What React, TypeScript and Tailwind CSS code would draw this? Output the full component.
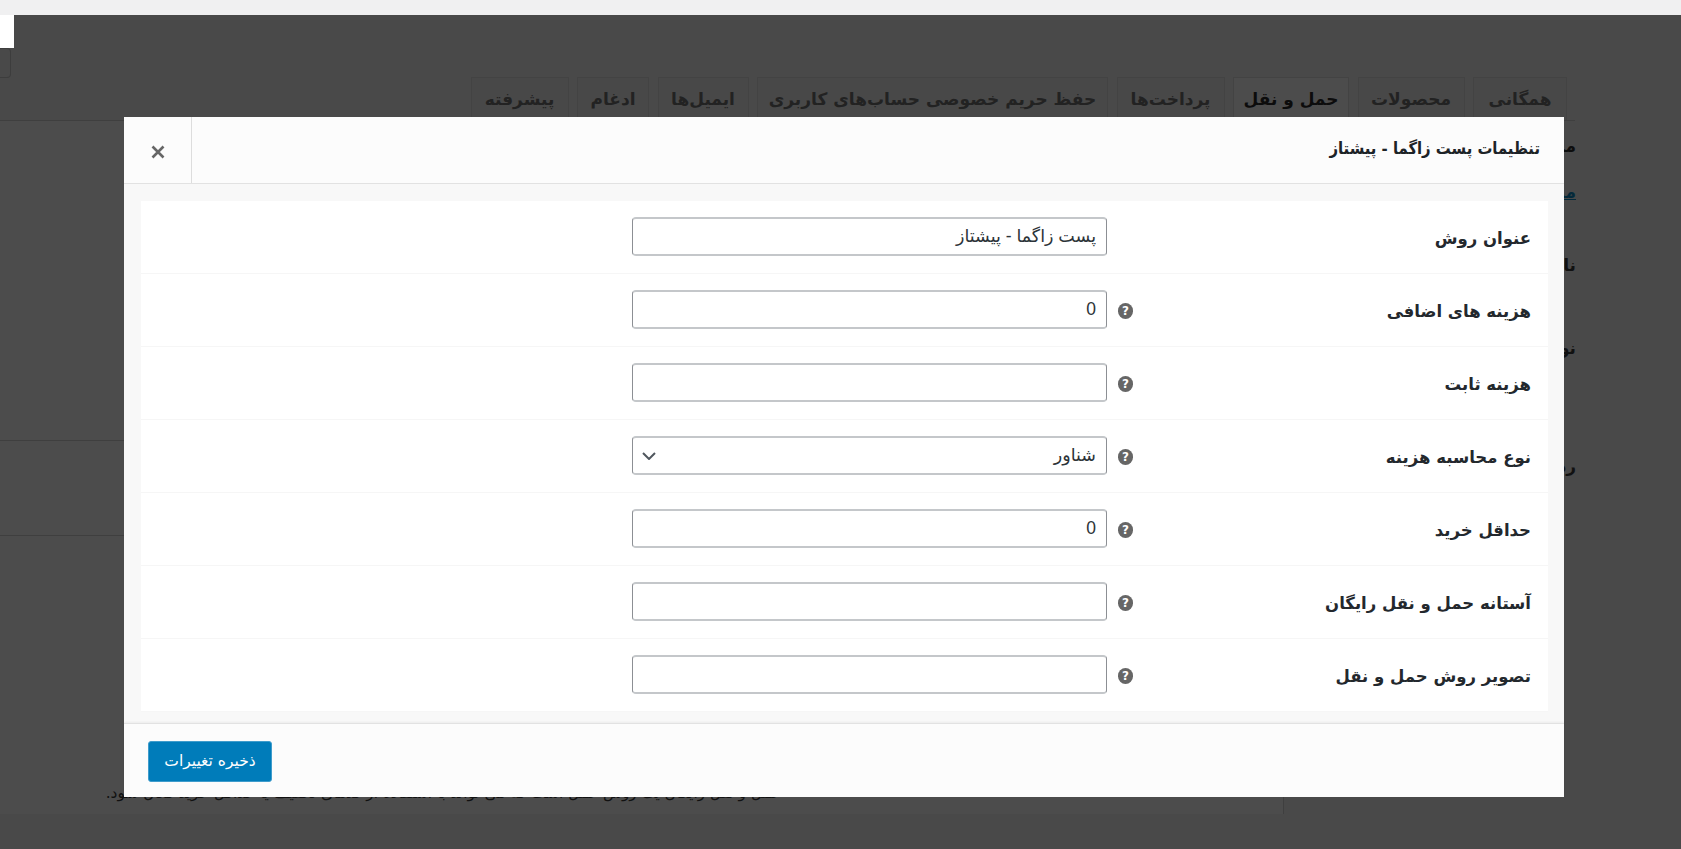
const font = "font-['DejaVu_Sans',sans-serif]";
const fieldFont = "font-['Liberation_Sans','DejaVu_Sans',sans-serif]";

const tabs = [
  { label: "همگانی", width: "w-[94px]" },
  { label: "محصولات", width: "w-[107px]" },
  { label: "حمل و نقل", width: "w-[116px]", active: true },
  { label: "پرداخت‌ها", width: "w-[108px]" },
  { label: "حفظ حریم خصوصی حساب‌های کاربری", width: "w-[351px]" },
  { label: "ایمیل‌ها", width: "w-[91px]" },
  { label: "ادغام", width: "w-[72px]" },
  { label: "پیشرفته", width: "w-[98px]" },
];

const rows = [
  { label: "عنوان روش", value: "پست زاگما - پیشتاز", help: false },
  { label: "هزینه های اضافی", value: "0", help: true },
  { label: "هزینه ثابت", value: "", help: true },
  { label: "نوع محاسبه هزینه", value: "شناور", help: true, select: true },
  { label: "حداقل خرید", value: "0", help: true },
  { label: "آستانه حمل و نقل رایگان", value: "", help: true },
  { label: "تصویر روش حمل و نقل", value: "", help: true },
];

const sideNotes = [
  { text: "من", className: "mt-[15px] font-bold text-[#0d0d0d]" },
  { text: "متن", className: "mt-[26px] font-bold underline text-[#04293a]" },
  { text: "نا", className: "mt-[53px] font-bold text-[#111]" },
  { text: "نو", className: "mt-[63px] font-bold text-[#111]" },
  { text: "رد", className: "mt-[98px] font-bold text-[#111]" },
];

const HelpIcon = () => (
  <span className="flex h-[16px] w-[15px] items-center justify-center rounded-full bg-[#666] text-[12px] font-bold leading-none text-white">
    ?
  </span>
);

const fieldBorder = "rounded border-x border-y-2 border-x-[#8c8f94] border-y-[#c4c7ca]";

const App = () => {
  return (
    <div dir="rtl" className={`${font} relative h-[849px] w-full overflow-hidden bg-[#494949]`}>
      {/* page behind the modal */}
      <div className="h-[15px] bg-[#f0f0f1]" />
      <div dir="ltr" className="h-[33px]">
        <div className="h-full w-[14px] bg-white" />
      </div>
      <div dir="ltr" className="h-[29px]">
        <div className="h-[30px] w-[11px] rounded-r border border-l-0 border-[#3d3d3d]" />
      </div>
      <div className="mr-[106px] flex h-[44px] gap-[8.5px] border-b border-[#3f3f3f] pr-[8px]">
        {tabs.map((tab) => (
          <div
            key={tab.label}
            className={`${tab.width} shrink-0 border border-b-0 border-[#434343] pt-[9px] text-center text-[17px] font-bold whitespace-nowrap ${
              tab.active ? "bg-[#4c4c4c] text-[#0c0c0c]" : "bg-[#484848] text-[#222]"
            }`}
          >
            {tab.label}
          </div>
        ))}
      </div>
      <div className="flex">
        <div className="flex-1 pr-[105px]">
          {sideNotes.map((note) => (
            <div key={note.text} className={`${note.className} w-fit text-[17px] leading-[20px] whitespace-nowrap`}>
              {note.text}
            </div>
          ))}
        </div>
        <div className="h-[693px] w-[1284px] border-r border-[#3f3f3f] bg-[#4c4c4c]">
          <div className="h-[320px] border-b border-[#3f3f3f]" />
          <div className="h-[95px] border-b border-[#3f3f3f]" />
          <p className="pr-[502px] pt-[246px] text-[15.4px] whitespace-nowrap text-[#111]">
            حمل و نقل رایگان یک روش حمل است که می تواند با استفاده از کدهای تخفیف یا حداقل خرید فعال شود.
          </p>
        </div>
      </div>

      {/* modal */}
      <div className="absolute left-[124px] top-[117px] flex h-[680px] w-[1440px] flex-col bg-[#fcfcfc]">
        <header className="flex h-[67px] shrink-0 items-center justify-between border-b border-[#e2e2e2] pr-[24px]">
          <h1 className="mb-[1px] font-['DejaVu_Sans_Condensed','DejaVu_Sans',sans-serif] text-[16.5px] font-bold text-[#1d2327]">
            تنظیمات پست زاگما - پیشتاز
          </h1>
          <button className="flex h-full w-[68px] items-center justify-center border-r border-[#ddd]">
            <svg className="mt-[3px]" width="14" height="14" viewBox="0 0 14 14" fill="none" stroke="#666" strokeWidth="2.6">
              <path d="M1.5 1.5l11 11M12.5 1.5l-11 11" />
            </svg>
          </button>
        </header>

        <div className="h-[539px] shrink-0 bg-[#f8f8f8] pl-[17px] pr-[16px] pt-[17px]">
          <div className="bg-white">
            {rows.map((row) => (
              <div key={row.label} className="flex h-[73px] items-start border-b border-[#f6f6f6] pt-[16px]">
                <label className="w-[415px] shrink-0 pr-[17px] pt-[10px] text-[16.5px] font-bold text-[#23282d]">
                  {row.label}
                </label>
                <div className="flex h-[41px] w-[26px] shrink-0 items-center">{row.help && <HelpIcon />}</div>
                {row.select ? (
                  <div className="relative h-[39px] w-[475px]">
                    <select className={`${fieldFont} ${fieldBorder} h-full w-full appearance-none bg-white px-[10px] text-[17.5px] text-[#2c3338]`}>
                      <option>{row.value}</option>
                    </select>
                    <svg className="absolute left-[10px] top-[16px]" width="14" height="8" viewBox="0 0 14 8" fill="none" stroke="#50575e" strokeWidth="2">
                      <path d="M1 1l6 6 6-6" />
                    </svg>
                  </div>
                ) : (
                  <input
                    readOnly
                    value={row.value}
                    className={`${fieldFont} ${fieldBorder} h-[39px] w-[475px] bg-white px-[10px] text-[17.5px] text-[#2c3338]`}
                  />
                )}
              </div>
            ))}
          </div>
        </div>

        <footer className="flex flex-1 justify-end border-t border-[#e2e2e2] pl-[24px] pt-[17px] shadow-[0_-1px_2px_rgba(0,0,0,0.05)]">
          <button className="h-[41px] w-[124px] rounded-[3px] border border-[#3f9ccc] bg-[#007cba] text-[15.5px] text-white">
            ذخیره تغییرات
          </button>
        </footer>
      </div>
    </div>
  );
};

export default App;
